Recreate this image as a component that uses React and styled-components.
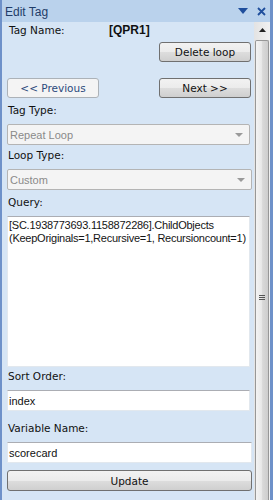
import React from 'react';
import styled, { createGlobalStyle } from 'styled-components';

const Global = createGlobalStyle`
  html, body { margin: 0; padding: 0; background: #d6e5f5; }
  body { font-family: "Liberation Sans", Arial, sans-serif; font-size: 11px; }
`;

export default function App() {
  return (
    <>
      <Global />
      <Frame>
        <TitleBar>
          <Title>Edit Tag</Title>
          <TitleIcons>
            <svg width="10" height="6" viewBox="0 0 10 6"><path d="M0 0h10L5 6z" fill="#1f4e9c" /></svg>
            <svg width="9" height="9" viewBox="0 0 9 9"><path d="M1 1l7 7M8 1L1 8" stroke="#1f4e9c" strokeWidth="1.8" /></svg>
          </TitleIcons>
        </TitleBar>
        <Body>
          <Content>
            <NameRow>
              <Label>Tag Name:</Label>
              <TagValue>[QPR1]</TagValue>
            </NameRow>
            <RightRow>
              <Button>Delete loop</Button>
            </RightRow>
            <NavRow>
              <Button flat>&lt;&lt; Previous</Button>
              <Button>Next &gt;&gt;</Button>
            </NavRow>
            <FieldLabel space={6}>Tag Type:</FieldLabel>
            <Select narrow>
              <span>Repeat Loop</span>
              <Caret />
            </Select>
            <FieldLabel space={4}>Loop Type:</FieldLabel>
            <Select>
              <span>Custom</span>
              <Caret />
            </Select>
            <FieldLabel space={6}>Query:</FieldLabel>
            <QueryBox>
              <div>[SC.1938773693.1158872286].ChildObjects</div>
              <div>(KeepOriginals=1,Recursive=1, Recursioncount=1)</div>
            </QueryBox>
            <FieldLabel space={3}>Sort Order:</FieldLabel>
            <TextInput narrow>index</TextInput>
            <FieldLabel space={11}>Variable Name:</FieldLabel>
            <TextInput>scorecard</TextInput>
            <WideButton>Update</WideButton>
          </Content>
          <ScrollBar>
            <ScrollArrow>
              <svg width="7" height="4" viewBox="0 0 7 4"><path d="M0 4h7L3.5 0z" fill="#222" /></svg>
            </ScrollArrow>
            <Thumb>
              <Grip>
                <i /><i /><i />
              </Grip>
            </Thumb>
          </ScrollBar>
        </Body>
      </Frame>
    </>
  );
}

const Frame = styled.div`
  width: 273px;
  height: 500px;
  box-sizing: border-box;
  border-left: 2px solid #6e91c9;
  border-right: 3px solid #6e91c9;
  display: flex;
  flex-direction: column;
  overflow: hidden;
  background: #d6e5f5;
`;

const TitleBar = styled.div`
  height: 22px;
  flex: none;
  background: #bad2ec;
  display: flex;
  align-items: center;
  justify-content: space-between;
  padding: 0 4px 0 3px;
`;

const Title = styled.div`
  font-size: 12px;
  color: #1f3c68;
  padding-top: 1px;
`;

const TitleIcons = styled.div`
  display: flex;
  align-items: center;
  gap: 9px;
`;

const Body = styled.div`
  flex: 1;
  display: flex;
  min-height: 0;
`;

const Content = styled.div`
  flex: 1;
  padding: 0 0 0 5px;
  display: flex;
  flex-direction: column;
`;

const Label = styled.div`
  color: #111;
  font-family: "DejaVu Sans", sans-serif;
  font-size: 10.5px;
`;

const NameRow = styled.div`
  display: flex;
  height: 13px;
  margin-top: 1px;
  padding-left: 2px;
  align-items: center;
  & > ${Label} { width: 100px; }
`;

const TagValue = styled.div`
  font-weight: bold;
  font-size: 12px;
  color: #111;
`;

const RightRow = styled.div`
  display: flex;
  justify-content: flex-end;
  margin-top: 6px;
  padding-right: 1px;
`;

const NavRow = styled.div`
  display: flex;
  justify-content: space-between;
  margin-top: 16px;
  padding-right: 1px;
`;

const Button = styled.div`
  width: 92px;
  height: 20px;
  box-sizing: border-box;
  border: 1px solid ${({ flat }) => (flat ? '#acb2b8' : '#707070')};
  border-radius: 3px;
  background: ${({ flat }) =>
    flat ? '#f4f4f4' : 'linear-gradient(#f2f2f2 0%, #ebebeb 50%, #dddddd 51%, #cfcfcf 100%)'};
  color: ${({ flat }) => (flat ? '#2b4a7c' : '#111')};
  display: flex;
  align-items: center;
  justify-content: center;
  font-family: "DejaVu Sans", sans-serif;
  font-size: 10.5px;
`;

const WideButton = styled(Button)`
  width: auto;
  height: 21px;
  margin-top: 7px;
`;

const FieldLabel = styled(Label)`
  margin-top: ${({ space }) => space}px;
  margin-bottom: 7px;
  height: 13px;
  line-height: 13px;
  padding-left: 1px;
`;

const Select = styled.div`
  height: 21px;
  box-sizing: border-box;
  margin-right: ${({ narrow }) => (narrow ? '2px' : '0')};
  border: 1px solid #b4b4b4;
  border-radius: 2px;
  background: #f4f4f4;
  color: #8a8a8a;
  display: flex;
  align-items: center;
  justify-content: space-between;
  padding: 0 6px 0 2px;
  font-size: 11px;
`;

const Caret = styled.span`
  width: 0;
  height: 0;
  border-left: 4px solid transparent;
  border-right: 4px solid transparent;
  border-top: 4px solid #9a9a9a;
`;

const QueryBox = styled.div`
  height: 151px;
  box-sizing: border-box;
  margin-right: 2px;
  background: #fff;
  border: 1px solid #e2e8ee;
  border-top-color: #abadb3;
  padding: 2px 0 0 1px;
  color: #141414;
  font-size: 11px;
  line-height: 13px;
  letter-spacing: -0.25px;
  white-space: nowrap;
  overflow: hidden;
`;

const TextInput = styled.div`
  height: 21px;
  box-sizing: border-box;
  margin-right: ${({ narrow }) => (narrow ? '2px' : '0')};
  background: #fff;
  border: 1px solid #e2e8ee;
  border-top-color: #abadb3;
  padding: 0 1px;
  display: flex;
  align-items: center;
  color: #111;
  font-size: 11px;
`;

const ScrollBar = styled.div`
  width: 16px;
  flex: none;
  margin-left: 2px;
  background: linear-gradient(90deg, #e3e3e3, #f1f1f1);
  display: flex;
  flex-direction: column;
  align-items: center;
`;

const ScrollArrow = styled.div`
  height: 16px;
  width: 100%;
  display: flex;
  align-items: center;
  justify-content: center;
`;

const Thumb = styled.div`
  flex: 1;
  width: 14px;
  margin-top: 2px;
  box-sizing: border-box;
  border: 1px solid #979797;
  border-bottom: none;
  border-radius: 2px 2px 0 0;
  background: linear-gradient(90deg, #f3f3f3 0%, #e9e9e9 45%, #d9d9d9 55%, #cdcdcd 100%);
  display: flex;
  justify-content: center;
  padding-top: 254px;
`;

const Grip = styled.div`
  display: flex;
  flex-direction: column;
  gap: 1px;
  & > i {
    display: block;
    width: 6px;
    height: 1px;
    background: #555;
  }
`;
